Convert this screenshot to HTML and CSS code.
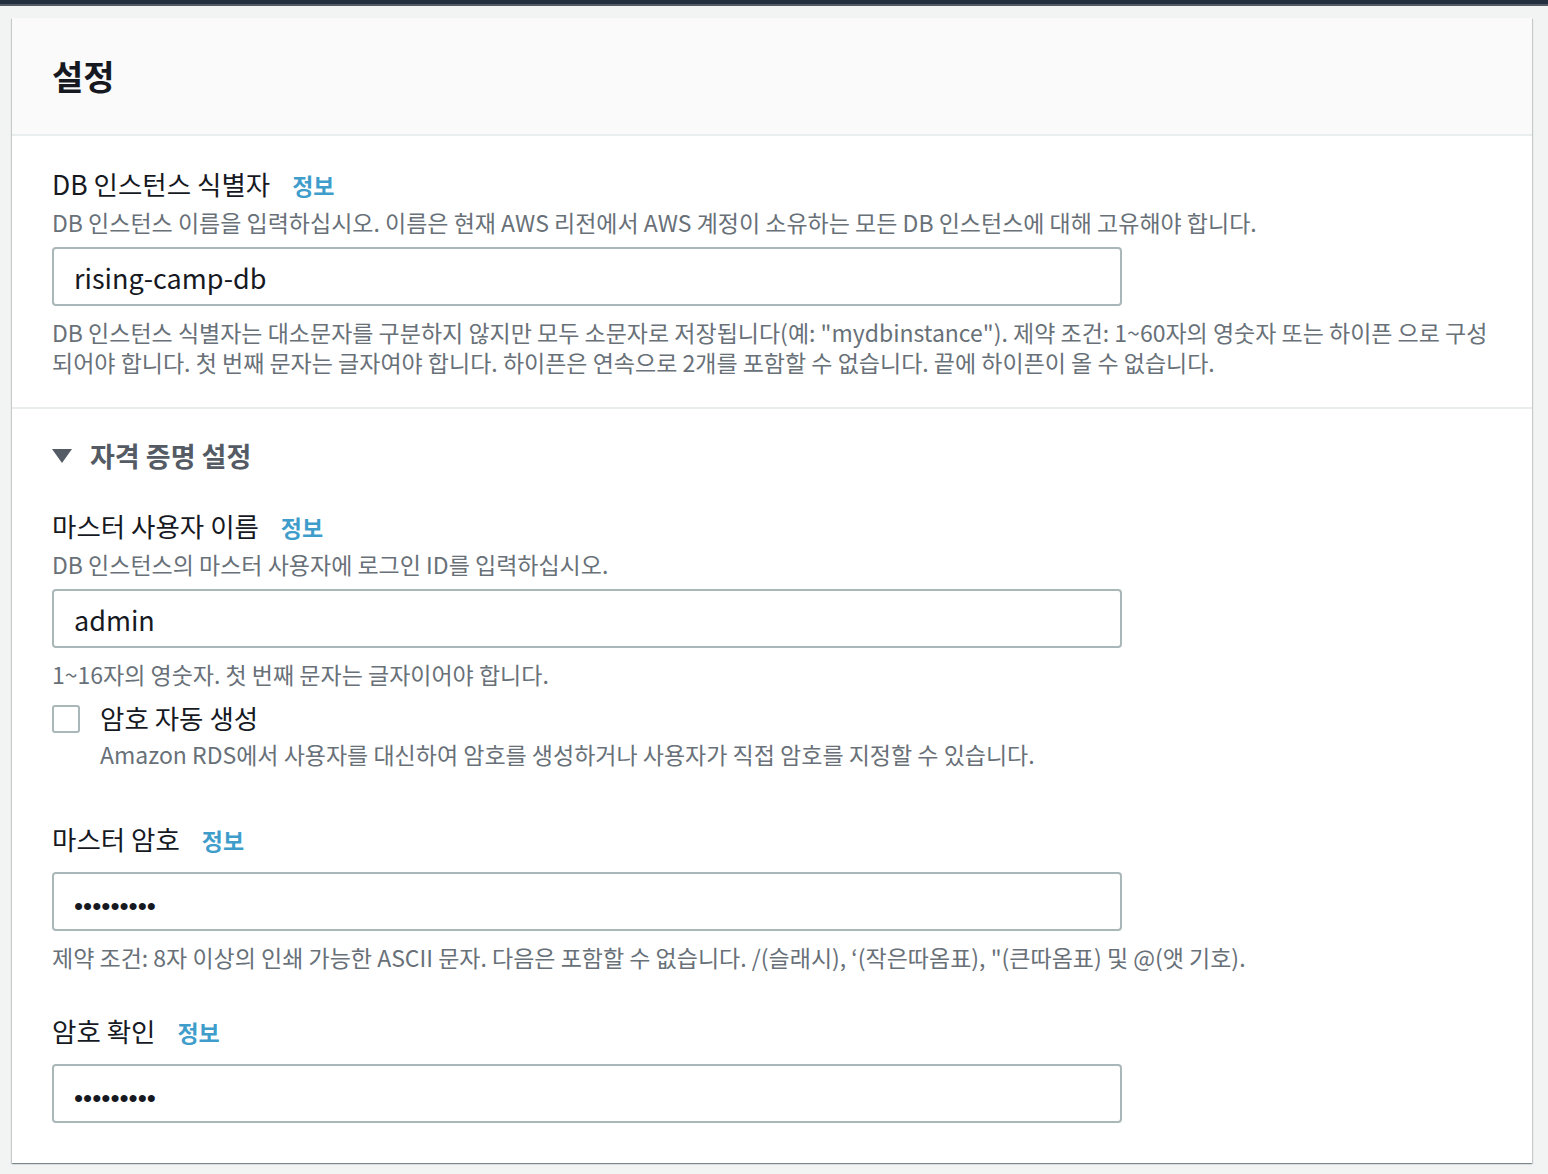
FILE: index.html
```html
<html>
	<head>
		<meta charset="utf-8">
		<link rel="stylesheet" href="styles.css">
	</head>
	<body>
		<div class="topbar"></div>
		<div class="panel">
			<div class="panel-header">
				<h2 class="title">설정</h2>
			</div>
			<div class="section">
				<div class="label">DB 인스턴스 식별자 <span class="info">정보</span></div>
				<div class="desc">DB 인스턴스 이름을 입력하십시오. 이름은 현재 AWS 리전에서 AWS 계정이 소유하는 모든 DB 인스턴스에 대해 고유해야 합니다.</div>
				<div class="input">rising-camp-db</div>
				<div class="hint">DB 인스턴스 식별자는 대소문자를 구분하지 않지만 모두 소문자로 저장됩니다(예: "mydbinstance"). 제약 조건: 1~60자의 영숫자 또는 하이픈 으로 구성되어야 합니다. 첫 번째 문자는 글자여야 합니다. 하이픈은 연속으로 2개를 포함할 수 없습니다. 끝에 하이픈이 올 수 없습니다.</div>
			</div>
			<div class="section section-2">
				<div class="expander"><span class="caret"></span>자격 증명 설정</div>

				<div class="label">마스터 사용자 이름 <span class="info">정보</span></div>
				<div class="desc">DB 인스턴스의 마스터 사용자에 로그인 ID를 입력하십시오.</div>
				<div class="input">admin</div>
				<div class="hint">1~16자의 영숫자. 첫 번째 문자는 글자이어야 합니다.</div>

				<div class="check-row">
					<span class="checkbox"></span>
					<div>
						<div class="check-label">암호 자동 생성</div>
						<div class="desc">Amazon RDS에서 사용자를 대신하여 암호를 생성하거나 사용자가 직접 암호를 지정할 수 있습니다.</div>
					</div>
				</div>

				<div class="label label-gap">마스터 암호 <span class="info">정보</span></div>
				<div class="input input-gap"><span class="dots">•••••••••</span></div>
				<div class="hint">제약 조건: 8자 이상의 인쇄 가능한 ASCII 문자. 다음은 포함할 수 없습니다. /(슬래시), ‘(작은따옴표), "(큰따옴표) 및 @(앳 기호).</div>

				<div class="label label-gap2">암호 확인 <span class="info">정보</span></div>
				<div class="input input-gap"><span class="dots">•••••••••</span></div>
			</div>
		</div>
	</body>
</html>
```

FILE: styles.css
```css
body {
	margin: 0;
	background: #f2f3f3;
	font-family: "Noto Sans CJK KR", "Noto Sans", sans-serif;
	color: #16191f;
}

.topbar {
	height: 4px;
	background: #232f3e;
	border-bottom: 2px solid #545b64;
}

.panel {
	margin: 12px 16px 10px 12px;
	width: 1520px;
	background: #fff;
	box-shadow: 0 1px 1px 0 rgba(0, 28, 36, 0.3), 1px 1px 1px 0 rgba(0, 28, 36, 0.15), -1px 1px 1px 0 rgba(0, 28, 36, 0.15);
}

.panel-header {
	background: #fafafa;
	border-bottom: 2px solid #eaeded;
	height: 116px;
	padding: 0 40px;
	display: flex;
	align-items: center;
}

.title {
	margin: 0;
	font-size: 34px;
	font-weight: 700;
	line-height: 40px;
}

.section {
	padding: 30px 40px 30px 40px;
}

.section-2 {
	border-top: 2px solid #eaeded;
	padding-top: 27px;
	padding-bottom: 40px;
}

.label {
	font-size: 26.5px;
	line-height: 36px;
}

.label-gap {
	margin-top: 51px;
}

.label-gap2 {
	margin-top: 41px;
}

.info {
	color: #3f9dcb;
	font-weight: 700;
	font-size: 23px;
	margin-left: 16px;
}

.desc {
	font-size: 23px;
	line-height: 32px;
	color: #687078;
	margin-top: 3px;
}

.hint {
	font-size: 23px;
	line-height: 30px;
	color: #687078;
	margin-top: 11px;
}

.input {
	margin-top: 9px;
	border: 2px solid #aab7b8;
	border-radius: 4px;
	padding: 2px 20px 0 20px;
	box-sizing: border-box;
	width: 1070px;
	height: 59px;
	display: flex;
	align-items: center;
	font-size: 27px;
	color: #16191f;
}

.input-gap {
	margin-top: 14px;
}

.dots {
	font-family: "Liberation Sans", sans-serif;
	font-size: 26px;
	line-height: 30px;
	margin-top: 6px;
}

.expander {
	font-size: 27px;
	font-weight: 700;
	color: #545b64;
	line-height: 40px;
	display: flex;
	align-items: center;
	margin-bottom: 32px;
}

.caret {
	width: 0;
	height: 0;
	border-left: 10px solid transparent;
	border-right: 10px solid transparent;
	border-top: 14px solid #545b64;
	margin-right: 18px;
}

.check-row {
	display: flex;
	align-items: flex-start;
	margin-top: 12px;
}

.checkbox {
	width: 28px;
	height: 28px;
	box-sizing: border-box;
	border: 2px solid #aab7b8;
	border-radius: 3px;
	margin-top: 4px;
	margin-right: 20px;
	flex-shrink: 0;
}

.check-label {
	font-size: 26.5px;
	line-height: 34px;
}
```
